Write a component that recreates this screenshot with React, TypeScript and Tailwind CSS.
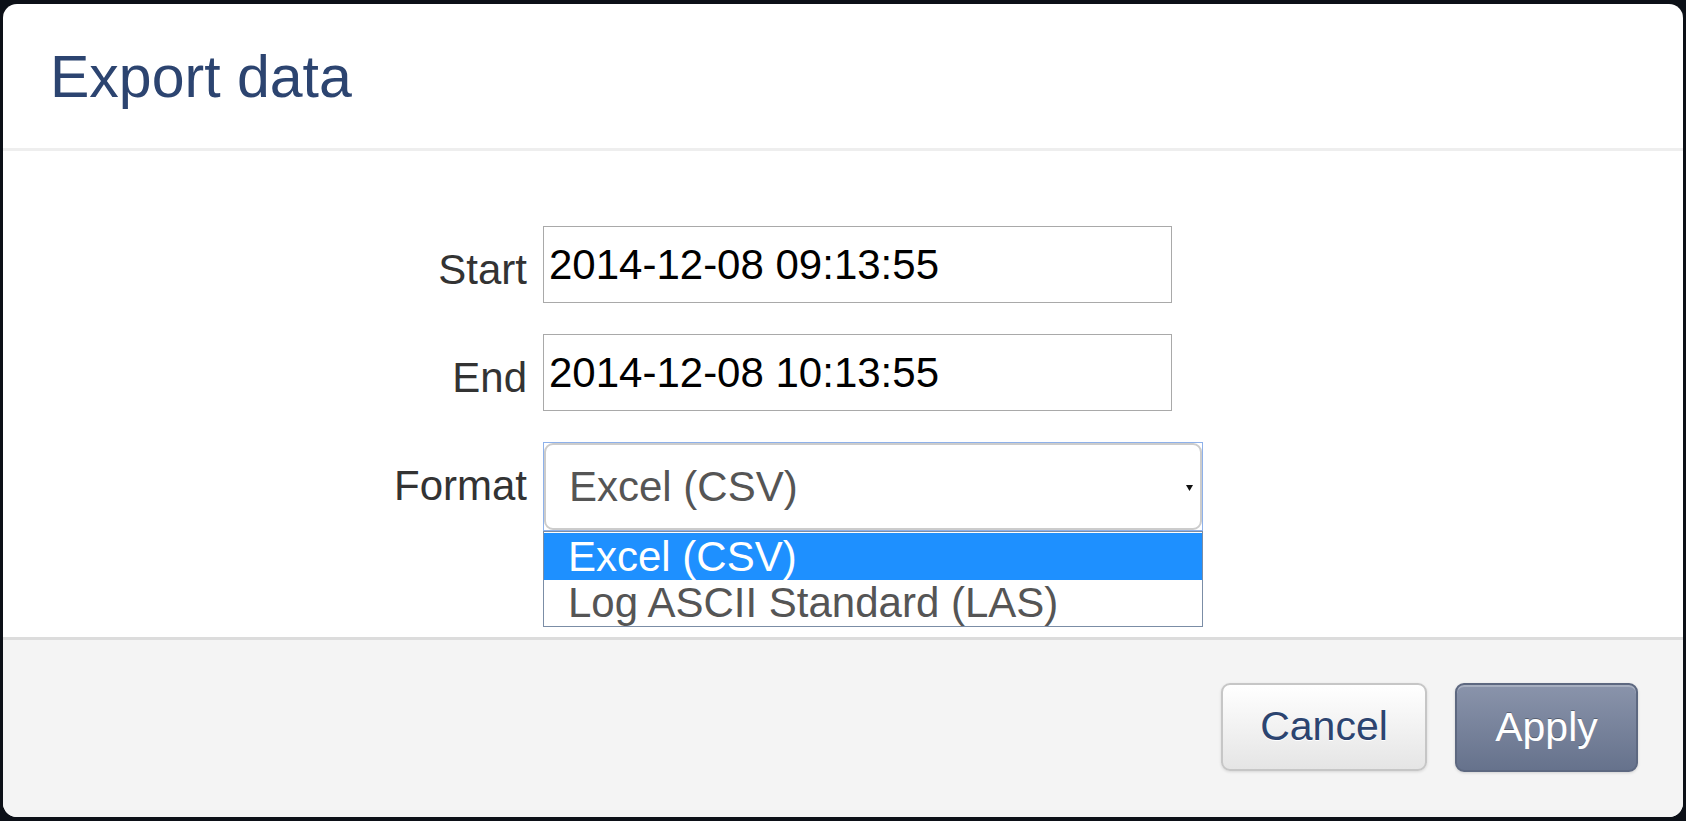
import React from "react";

const font = { fontFamily: '"Liberation Sans", Arial, sans-serif' };

export default function App() {
  return (
    <div
      className="w-[1686px] h-[821px] bg-[#0c1017] pt-[4px] pl-[3px] pr-[3px] pb-[4px]"
      style={font}
    >
      <div className="w-[1680px] h-[813px] bg-white rounded-[14px] overflow-hidden flex flex-col">
        {/* Header */}
        <div className="h-[144px] shrink-0 pt-[40px] pl-[47px]">
          <h1 className="text-[59px] leading-[66px] text-[#2c4470] font-normal">Export data</h1>
        </div>
        <div className="h-[3px] shrink-0 bg-[#eeeeee]" />

        {/* Body */}
        <div className="h-[486px] shrink-0 pt-[75px] flex flex-col gap-[31px]">
          <div className="flex items-start">
            <label className="w-[540px] pr-[16px] text-right text-[42px] leading-[48px] pt-[20px] text-[#333333]">
              Start
            </label>
            <div className="w-[629px] h-[77px] border border-[#a9a9a9] px-[5px] flex items-center text-[42px] text-black">
              2014-12-08 09:13:55
            </div>
          </div>
          <div className="flex items-start">
            <label className="w-[540px] pr-[16px] text-right text-[42px] leading-[48px] pt-[20px] text-[#333333]">
              End
            </label>
            <div className="w-[629px] h-[77px] border border-[#a9a9a9] px-[5px] flex items-center text-[42px] text-black">
              2014-12-08 10:13:55
            </div>
          </div>
          <div className="flex items-start">
            <label className="w-[540px] pr-[16px] text-right text-[42px] leading-[48px] pt-[20px] text-[#333333]">
              Format
            </label>
            <div className="relative w-[660px]">
              <div className="h-[89px] border border-[#8eb1ea]">
                <div className="h-full border-2 border-[#cccccc] rounded-[9px] bg-white flex items-center justify-between pl-[23px] pr-[7px] text-[42px] text-[#555555]">
                  <span>Excel (CSV)</span>
                  <svg width="7" height="6" viewBox="0 0 7 6" className="mt-[2px]">
                    <path d="M0 0 L7 0 L3.5 6 Z" fill="#111111" />
                  </svg>
                </div>
              </div>
              <div className="absolute left-0 top-[89px] w-[660px] border border-[#7b8da6] bg-white pt-[1px] text-[42px]">
                <div className="h-[47px] leading-[47px] bg-[#1e90ff] text-white pl-[24px]">Excel (CSV)</div>
                <div className="h-[46px] leading-[46px] text-[#555555] pl-[24px]">Log ASCII Standard (LAS)</div>
              </div>
            </div>
          </div>
        </div>

        {/* Footer */}
        <div className="h-[3px] shrink-0 bg-[#dcdcdc]" />
        <div className="flex-1 bg-[#f4f4f4] flex justify-end items-start pt-[43px] pr-[45px] gap-[28px]">
          <button
            className="w-[206px] h-[88px] rounded-[9px] border-2 border-[#c6c6c6] bg-gradient-to-b from-[#ffffff] to-[#e5e5e5] text-[#2c4470] text-[41px] shadow-[0_1px_3px_rgba(0,0,0,0.12)]"
            style={{ ...font, textShadow: "0 1px 0 #ffffff" }}
          >
            Cancel
          </button>
          <button
            className="w-[183px] h-[89px] rounded-[9px] border-2 border-[#5d6880] bg-gradient-to-b from-[#8a94ab] to-[#66728c] text-white text-[41px] shadow-[inset_0_2px_0_rgba(255,255,255,0.25),0_1px_3px_rgba(0,0,0,0.15)]"
            style={{ ...font, textShadow: "0 -1px 0 rgba(0,0,0,0.3)" }}
          >
            Apply
          </button>
        </div>
      </div>
    </div>
  );
}
